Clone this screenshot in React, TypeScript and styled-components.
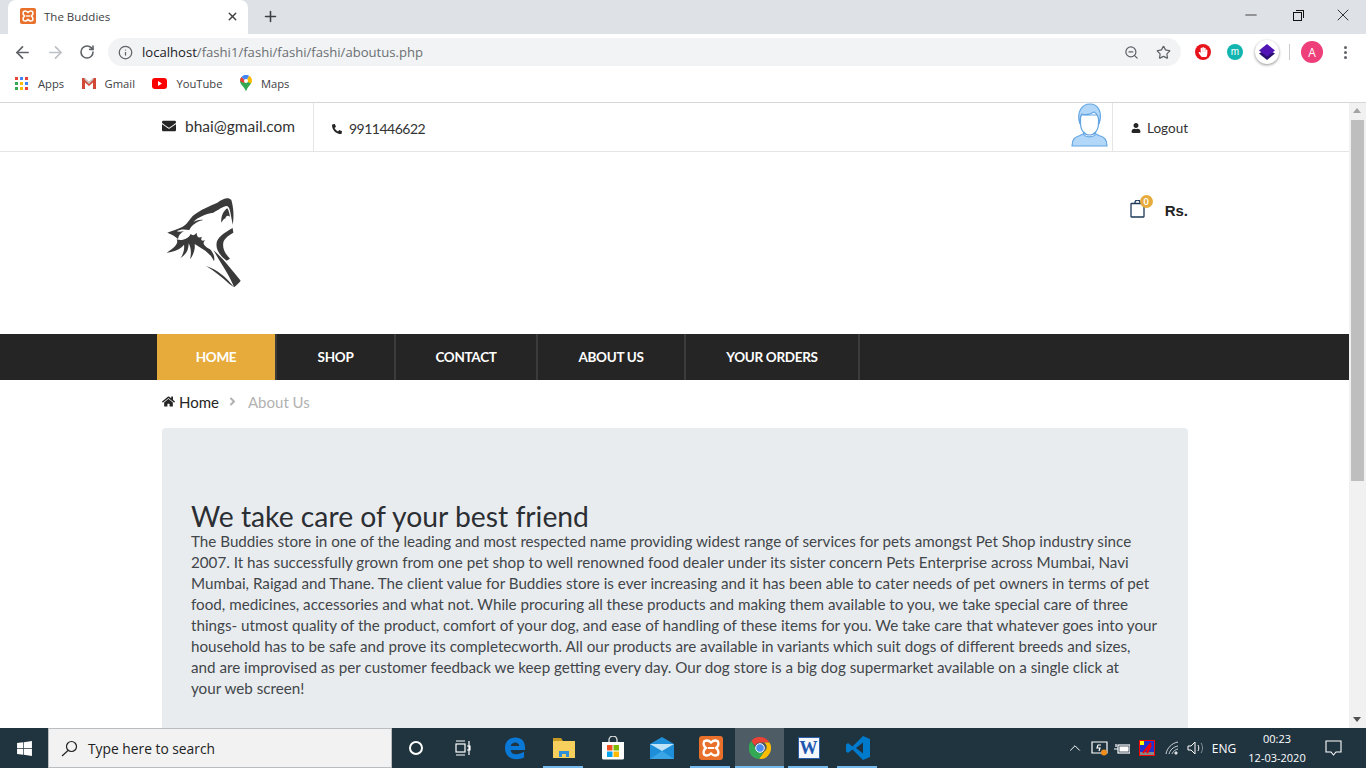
import React from "react";
import styled, { createGlobalStyle } from "styled-components";
import { FaEnvelope, FaPhone, FaUser, FaHome, FaAngleRight, FaWindows, FaHandPaper } from "react-icons/fa";
import { ArrowLeft, ArrowRight, RotateCw, Info, ZoomOut, Star, Plus, X, Minus, ChevronUp } from "lucide-react";

const ABOUT_LINES = [
	"The Buddies store in one of the leading and most respected name providing widest range of services for pets amongst Pet Shop industry since",
	"2007. It has successfully grown from one pet shop to well renowned food dealer under its sister concern Pets Enterprise across Mumbai, Navi",
	"Mumbai, Raigad and Thane. The client value for Buddies store is ever increasing and it has been able to cater needs of pet owners in terms of pet",
	"food, medicines, accessories and what not. While procuring all these products and making them available to you, we take special care of three",
	"things- utmost quality of the product, comfort of your dog, and ease of handling of these items for you. We take care that whatever goes into your",
	"household has to be safe and prove its completecworth. All our products are available in variants which suit dogs of different breeds and sizes,",
	"and are improvised as per customer feedback we keep getting every day. Our dog store is a big dog supermarket available on a single click at",
	"your web screen!",
];

const NAV_ITEMS = [
	{ label: "HOME", width: 120, active: true },
	{ label: "SHOP", width: 119 },
	{ label: "CONTACT", width: 142 },
	{ label: "ABOUT US", width: 148 },
	{ label: "YOUR ORDERS", width: 174 },
];

const XamppIcon: React.FC<{ size: number }> = ({ size }) => (
	<svg width={size} height={size} viewBox="0 0 24 24">
		<rect width="24" height="24" rx="3" fill="#e8702a" />
		<path d="M5 5.500c3-2 5-1 7 1 2-2 4-3 7-1 1 3 0 5-2 6.500 2 1.500 3 3.500 2 6.500-3 2-5 1-7-1-2 2-4 3-7 1-1-3 0-5 2-6.500-2-1.500-3-3.500-2-6.500z" fill="none" stroke="#fff" strokeWidth="2.300" />
		<path d="M9 12h6" stroke="#fff" strokeWidth="2" />
	</svg>
);

const WolfLogo = () => (
	<WolfSvg width="90" height="105" viewBox="0 0 270 315">
		<g fill="#3a3a3a">
			<path d="M214 30C204 20 190 26 172 38C150 48 122 58 98 78C88 90 80 104 68 110C52 117 38 122 22 128C34 132 44 138 54 147C56 136 62 128 72 124C64 124 58 126 50 124C62 116 76 118 88 120C96 104 112 94 130 90C118 88 108 92 100 96C112 82 136 72 160 68C175 60 190 48 200 48C208 50 210 60 212 72C214 84 216 92 218 104C223 80 220 50 214 30Z" />
			<path d="M202 55C190 62 182 80 184 98C188 92 192 84 196 86C198 76 204 76 210 80C208 70 206 60 202 55Z" />
			<path d="M218 114C200 124 178 137 171 154C165 174 176 194 200 212L210 206C192 188 186 170 191 154C198 140 210 134 220 128Z" />
			<path d="M50 148C56 160 46 172 20 188C48 184 62 176 72 164C74 178 70 192 62 204C80 192 86 178 86 160C94 174 94 192 90 208C102 192 106 176 104 162L136 182C148 192 156 200 162 214C166 200 158 186 150 178C130 166 126 160 136 150C126 156 120 150 126 140C116 146 110 140 110 128C104 136 98 138 92 132C86 146 66 154 50 148Z" />
			<path d="M160 180C190 206 214 238 242 272C237 280 230 284 222 292C214 266 190 232 160 180Z" />
			<path d="M138 228C170 238 200 262 222 292L208 282C186 262 164 244 138 228Z" />
		</g>
	</WolfSvg>
);

const App: React.FC = () => (
	<Screen>
		<GlobalStyle />
		<TabStrip>
			<Tab>
				<XamppIcon size={16} />
				<TabTitle>The Buddies</TabTitle>
				<X size={13} strokeWidth={2.5} color="#3c4043" />
			</Tab>
			<NewTab>
				<Plus size={17} strokeWidth={2.2} color="#3c4043" />
			</NewTab>
			<WindowControls>
				<WindowButton>
					<Minus size={18} strokeWidth={1} color="#111" />
				</WindowButton>
				<WindowButton>
					<RestoreIcon />
				</WindowButton>
				<WindowButton>
					<X size={20} strokeWidth={1} color="#111" />
				</WindowButton>
			</WindowControls>
		</TabStrip>
		<Toolbar>
			<ArrowLeft size={19} color="#5f6368" strokeWidth={2.2} />
			<ArrowRight size={19} color="#bdc1c6" strokeWidth={2.2} />
			<RotateCw size={16} color="#5f6368" strokeWidth={2.4} />
			<Omnibox>
				<Info size={15} color="#5f6368" strokeWidth={2} />
				<Url>
					<b>localhost</b>/fashi1/fashi/fashi/fashi/aboutus.php
				</Url>
				<OmniboxEnd>
					<ZoomOut size={15} color="#5f6368" strokeWidth={2} />
					<Star size={15} color="#5f6368" strokeWidth={2} />
				</OmniboxEnd>
			</Omnibox>
			<Extensions>
				<ExtensionDot $bg="#e8141c">
					<FaHandPaper size={10} color="#fff" />
				</ExtensionDot>
				<ExtensionDot $bg="#12b5b0">m</ExtensionDot>
				<LayersBadge>
					<svg width="18" height="18" viewBox="0 0 18 18">
						<path d="M1 10.500 9 6l8 4.500L9 17z" fill="#2a1070" />
						<path d="M1 7.500 9 1l8 6.500L9 13.500z" fill="#5215b5" />
					</svg>
				</LayersBadge>
				<ToolbarDivider />
				<Avatar>A</Avatar>
				<MenuDots>
					<i />
					<i />
					<i />
				</MenuDots>
			</Extensions>
		</Toolbar>
		<BookmarkBar>
			<Bookmark>
				<AppsGrid>
					{["#ea4335", "#4285f4", "#ea4335", "#34a853", "#fbbc04", "#4285f4", "#34a853", "#fbbc04", "#ea4335"].map((c, i) => (
						<i key={i} style={{ background: c }} />
					))}
				</AppsGrid>
				Apps
			</Bookmark>
			<Bookmark>
				<svg width="14" height="11" viewBox="0 0 14 11">
					<path d="M0 0h2.500L7 4l4.500-4H14v11h-3V4.500L7 8 3 4.500V11H0z" fill="#d14836" />
					<path d="M2.500 0 7 4l4.500-4v1.500L7 6 2.500 1.500z" fill="#c9c9c9" />
				</svg>
				Gmail
			</Bookmark>
			<Bookmark>
				<svg width="15" height="11" viewBox="0 0 15 11">
					<rect width="15" height="11" rx="3" fill="#f00" />
					<path d="M6 3v5l4-2.500z" fill="#fff" />
				</svg>
				YouTube
			</Bookmark>
			<Bookmark>
				<svg width="12" height="16" viewBox="0 0 12 16">
					<path d="M6 16C4.500 12 0 9.500 0 6c0-1.500.5-2.800 1.500-4L8 9z" fill="#34a853" />
					<path d="M6 16c1-3 3.500-5 5-7.500L6 4 3.500 10.500z" fill="#34a853" />
					<path d="M12 6c0 1-.4 1.800-1 2.500L6 6l3-5.200C11 1.700 12 3.700 12 6z" fill="#fbbc04" />
					<path d="M1.500 2 6 6 4 8 0 6c0-1.500.5-2.800 1.500-4z" fill="#ea4335" />
					<path d="M1.500 2A6 6 0 0 1 9 .8L6 6z" fill="#4285f4" />
					<circle cx="6" cy="6" r="2" fill="#fff" />
				</svg>
				Maps
			</Bookmark>
		</BookmarkBar>
		<Viewport>
			<Page>
				<TopBar>
					<Container>
						<TopBarRow>
							<MailCell>
								<FaEnvelope size={14} color="#252525" />
								bhai@gmail.com
							</MailCell>
							<PhoneCell>
								<FaPhone size={10} color="#252525" style={{ transform: "scaleX(-1)" }} />
								9911446622
							</PhoneCell>
							<TopBarEnd>
								<UserPicture width="37" height="44" viewBox="0 0 37 44">
									<path d="M1 43c0-7 3-9 8-10.500l5-2.500h9l5 2.500c5 1.500 8 3.500 8 10.500z" fill="#b3d7f8" stroke="#62a5e2" strokeWidth="1.200" />
									<path d="M13 28v4c2 2.500 9 2.500 11 0v-4z" fill="#fff" stroke="#62a5e2" strokeWidth="1.200" />
									<path d="M9.500 12v8c0 8 4.500 12 9 12s9-4 9-12v-8z" fill="#fff" stroke="#62a5e2" strokeWidth="1.200" />
									<path d="M9 21C5 9 11 1 19 1c8 0 13 8 9 20 0-6-1-10-5-12-4 2.500-9 3-12 2-2 2-2 5-2 10z" fill="#b3d7f8" stroke="#62a5e2" strokeWidth="1.200" />
								</UserPicture>
								<LogoutCell>
									<FaUser size={10} color="#252525" />
									Logout
								</LogoutCell>
							</TopBarEnd>
						</TopBarRow>
					</Container>
				</TopBar>
				<Container>
					<Masthead>
						<WolfLogo />
						<Cart>
							<CartIconWrap>
								<svg width="16" height="18" viewBox="0 0 16 18" fill="none" stroke="#1d3a5a" strokeWidth="1.300">
									<rect x="1" y="3.500" width="13" height="13.500" rx="0.500" />
									<path d="M5 3.500V2.500a2.500 2.500 0 0 1 5 0v1" />
								</svg>
								<CartBadge>0</CartBadge>
							</CartIconWrap>
							<CartTotal>Rs.</CartTotal>
						</Cart>
					</Masthead>
				</Container>
				<NavBar>
					<NavInner>
						{NAV_ITEMS.map((item) => (
							<NavItem key={item.label} $width={item.width} $active={item.active}>
								{item.label}
							</NavItem>
						))}
					</NavInner>
				</NavBar>
				<Container>
					<Breadcrumb>
						<FaHome size={13} color="#252525" />
						<span>Home</span>
						<BreadcrumbArrow>
							<FaAngleRight size={13} color="#b2b2b2" />
						</BreadcrumbArrow>
						<Muted>About Us</Muted>
					</Breadcrumb>
					<AboutCard>
						<AboutTitle>We take care of your best friend</AboutTitle>
						{ABOUT_LINES.map((line) => (
							<AboutLine key={line}>{line}</AboutLine>
						))}
					</AboutCard>
				</Container>
			</Page>
			<Scrollbar>
				<ScrollArrow $up />
				<ScrollTrack>
					<ScrollThumb />
				</ScrollTrack>
				<ScrollArrow />
			</Scrollbar>
		</Viewport>
		<Taskbar>
			<StartButton>
				<FaWindows size={17} color="#fff" />
			</StartButton>
			<SearchBox>
				<svg width="17" height="17" viewBox="0 0 17 17" fill="none" stroke="#222" strokeWidth="1.200">
					<circle cx="10.500" cy="6.500" r="5" />
					<path d="M7 10.500 1 16" />
				</svg>
				Type here to search
			</SearchBox>
			<CortanaRing />
			<TaskViewIcon>
				<svg width="16" height="16" viewBox="0 0 16 16" fill="none" stroke="#fff" strokeWidth="1.200">
					<path d="M1 1h9M1 15h9" />
					<rect x="1" y="4" width="9" height="8" />
					<path d="M14 1v14M12 6h3v4h-3" />
				</svg>
			</TaskViewIcon>
			<AppIcons>
				<AppSlot>
					<svg width="21" height="24" viewBox="0 0 22 24">
						<path d="M1 12C1 5 6 1 12 1c6 0 10 4 10 10v3H7c0 5 8 6 14 2v6c-9 4-20 1-20-10zm6-2h9c0-5-8-5-9 0z" fill="#0a78d6" />
					</svg>
				</AppSlot>
				<AppSlot $running>
					<svg width="22" height="20" viewBox="0 0 22 20">
						<path d="M0 0h8l2 3H0z" fill="#c79a22" />
						<rect y="3" width="22" height="17" fill="#f6cf5c" />
						<path d="M6 19v-6h10v6h-3v-3H9v3z" fill="#2f8fd8" />
					</svg>
				</AppSlot>
				<AppSlot>
					<svg width="24" height="24" viewBox="0 0 24 24">
						<path d="M8 6V4a4 4 0 0 1 8 0v2" fill="none" stroke="#ddd" strokeWidth="1.300" />
						<path d="M1 6h22v16a1.500 1.500 0 0 1-1.500 1.500h-19A1.500 1.500 0 0 1 1 22z" fill="#fff" />
						<rect x="6" y="9" width="5.500" height="5.500" fill="#f25022" />
						<rect x="12.500" y="9" width="5.500" height="5.500" fill="#7fba00" />
						<rect x="6" y="15.500" width="5.500" height="5.500" fill="#00a4ef" />
						<rect x="12.500" y="15.500" width="5.500" height="5.500" fill="#ffb900" />
					</svg>
				</AppSlot>
				<AppSlot>
					<svg width="24" height="22" viewBox="0 0 24 22">
						<path d="M0 7 12 0l12 7v15H0z" fill="#1f8ed8" />
						<path d="M0 7h24L12 14z" fill="#bfe3f8" />
						<path d="M0 22 12 14l12 8z" fill="#3aa5e6" />
					</svg>
				</AppSlot>
				<AppSlot $running>
					<XamppIcon size={24} />
				</AppSlot>
				<AppSlot $running $active>
					<svg width="22" height="22" viewBox="0 0 22 22">
						<path d="M11 0a11 11 0 0 1 9.500 5.500H11a5.500 5.500 0 0 0-5 3.200L2.200 4A11 11 0 0 1 11 0z" fill="#ea4335" />
						<path d="M20.500 5.500A11 11 0 0 1 10 22l4.800-7a5.500 5.500 0 0 0 .3-9.500z" fill="#fbbc04" />
						<path d="M10 22A11 11 0 0 1 2.200 4L7 12a5.500 5.500 0 0 0 7.800 3z" fill="#34a853" />
						<circle cx="11" cy="11" r="4.300" fill="#4a8cf0" stroke="#fff" strokeWidth="1" />
					</svg>
				</AppSlot>
				<AppSlot $running>
					<WordIcon>W</WordIcon>
				</AppSlot>
				<AppSlot $running>
					<svg width="24" height="24" viewBox="0 0 24 24">
						<path d="M17 0 24 3v18l-7 3L6.500 13.500 2 17l-2-1.500v-7L2 7l4.500 3.500z" fill="#007acc" />
						<path d="M17 6.500 10 12l7 5.500z" fill="#1f2f3c" />
					</svg>
				</AppSlot>
			</AppIcons>
			<Tray>
				<TraySlot $width={24}>
					<ChevronUp size={18} color="#fff" strokeWidth={1.3} />
				</TraySlot>
				<TraySlot $width={24}>
					<svg width="17" height="16" viewBox="0 0 17 16" fill="none" stroke="#fff" strokeWidth="1.200">
						<path d="M1 2h15v11H1z" />
						<path d="M10 5H7L6 8h3l-1 3" />
						<circle cx="13" cy="12.500" r="3" fill="#f28c1c" stroke="none" />
					</svg>
				</TraySlot>
				<TraySlot $width={22}>
					<svg width="16" height="11" viewBox="0 0 16 11" fill="none" stroke="#fff" strokeWidth="1.200">
						<rect x="4" y="2" width="12" height="8" />
						<rect x="6" y="4" width="8" height="4" fill="#fff" />
						<path d="M0 6h4M2 1v3" />
					</svg>
				</TraySlot>
				<TraySlot $width={28}>
					<svg width="16" height="16" viewBox="0 0 16 16">
						<rect width="16" height="16" fill="#f00" />
						<rect x="1" y="1" width="14" height="14" fill="#2233cc" />
						<rect x="1" y="12" width="14" height="3" fill="#888" />
						<path d="M4 13 12 3M8 13l4-8" stroke="#f00" strokeWidth="2" />
						<rect x="1" y="1" width="4" height="4" fill="#ff0" />
					</svg>
				</TraySlot>
				<TraySlot $width={22}>
					<svg width="14" height="14" viewBox="0 0 14 14" fill="none" stroke="#cfd4d8" strokeWidth="1">
						<path d="M1 13C2 7 7 2 13 1M4 13c1-4 4-7 9-8M7 13c1-2 2-4 6-5" />
						<circle cx="11" cy="12" r="1.200" fill="#fff" />
					</svg>
				</TraySlot>
				<TraySlot $width={24}>
					<svg width="17" height="14" viewBox="0 0 17 14" fill="none" stroke="#fff" strokeWidth="1">
						<path d="M1 5h3l4-4v12l-4-4H1zM11 4c1 2 1 4 0 6" />
						<path d="M14 2c2 3 2 7 0 10" stroke="#8a949b" />
					</svg>
				</TraySlot>
				<TraySlot $width={34}>
					<TrayText>ENG</TrayText>
				</TraySlot>
				<TraySlot $width={72}>
					<Clock>
						<span>00:23</span>
						<span>12-03-2020</span>
					</Clock>
				</TraySlot>
				<TraySlot $width={40}>
					<svg width="17" height="16" viewBox="0 0 17 16" fill="none" stroke="#fff" strokeWidth="1.100">
						<path d="M1 1h15v11h-5l-2.500 3L6 12H1z" />
					</svg>
				</TraySlot>
			</Tray>
		</Taskbar>
	</Screen>
);

export default App;

const GlobalStyle = createGlobalStyle`
	html, body {
		margin: 0;
		padding: 0;
		height: 100%;
		overflow: hidden;
		background: #fff;
	}
	* {
		box-sizing: border-box;
	}
`;

const Screen = styled.div`
	width: 1366px;
	height: 768px;
	display: flex;
	flex-direction: column;
	overflow: hidden;
	font-family: "Liberation Sans", Arial, sans-serif;
`;

const TabStrip = styled.div`
	height: 34px;
	flex: none;
	display: flex;
	align-items: flex-end;
	padding-left: 8px;
	background: #dee1e6;
`;

const Tab = styled.div`
	width: 240px;
	height: 34px;
	display: flex;
	align-items: center;
	gap: 8px;
	padding: 0 9px 2px 12px;
	background: #fff;
	border-radius: 8px 8px 0 0;
`;

const TabTitle = styled.span`
	flex: 1;
	font-family: "Open Sans", sans-serif;
	font-size: 11.500px;
	color: #3c4043;
`;

const NewTab = styled.div`
	width: 28px;
	height: 34px;
	margin-left: 8px;
	padding-bottom: 1px;
	display: flex;
	align-items: center;
	justify-content: center;
`;

const WindowControls = styled.div`
	margin-left: auto;
	height: 30px;
	margin-bottom: 4px;
	display: flex;
`;

const WindowButton = styled.div`
	width: 46px;
	display: flex;
	align-items: center;
	justify-content: center;
`;

const RestoreIcon = styled.div`
	width: 9px;
	height: 9px;
	position: relative;
	top: 1px;
	border: 1px solid #111;
	&::after {
		content: "";
		position: absolute;
		top: -3px;
		right: -3px;
		width: 7px;
		height: 7px;
		border-top: 1px solid #111;
		border-right: 1px solid #111;
	}
`;

const Toolbar = styled.div`
	height: 36px;
	flex: none;
	display: flex;
	align-items: center;
	gap: 14px;
	padding: 0 0 0 13px;
	background: #fff;
`;

const Omnibox = styled.div`
	width: 1073px;
	height: 28px;
	margin-left: -1px;
	display: flex;
	align-items: center;
	gap: 9px;
	padding: 0 10px 0 10px;
	background: #f1f3f4;
	border-radius: 14px;
`;

const Url = styled.span`
	font-family: "Open Sans", sans-serif;
	font-size: 13.100px;
	color: #6b6f73;
	b {
		font-weight: 400;
		color: #202124;
	}
`;

const OmniboxEnd = styled.div`
	margin-left: auto;
	display: flex;
	align-items: center;
	gap: 17px;
`;

const Extensions = styled.div`
	display: flex;
	align-items: center;
`;

const ExtensionDot = styled.div<{ $bg: string }>`
	width: 16px;
	height: 16px;
	margin-right: 16px;
	border-radius: 50%;
	display: flex;
	align-items: center;
	justify-content: center;
	font-size: 10px;
	line-height: 1;
	color: #fff;
	background: ${(p) => p.$bg};
`;

const LayersBadge = styled.div`
	width: 24px;
	height: 24px;
	margin-left: -4px;
	border-radius: 50%;
	background: #fff;
	box-shadow: 0 1px 3px rgba(0, 0, 0, 0.45);
	display: flex;
	align-items: center;
	justify-content: center;
`;

const ToolbarDivider = styled.div`
	width: 1px;
	height: 16px;
	margin: 0 11px 0 10px;
	background: #c8cbcf;
`;

const Avatar = styled.div`
	width: 22px;
	height: 22px;
	border-radius: 50%;
	display: flex;
	align-items: center;
	justify-content: center;
	background: #ee3f7a;
	color: #fff;
	font-family: "Open Sans", sans-serif;
	font-size: 12px;
`;

const MenuDots = styled.div`
	margin-left: 21px;
	display: flex;
	flex-direction: column;
	gap: 2px;
	i {
		width: 3px;
		height: 3px;
		background: #5f6368;
		border-radius: 50%;
	}
`;

const BookmarkBar = styled.div`
	height: 33px;
	flex: none;
	display: flex;
	align-items: center;
	gap: 17.500px;
	padding: 0 0 6px 15px;
	background: #fff;
	border-bottom: 1px solid #d4d6d9;
`;

const Bookmark = styled.div`
	display: flex;
	align-items: center;
	gap: 9px;
	font-family: "Open Sans", sans-serif;
	font-size: 11.200px;
	color: #3c4043;
`;

const AppsGrid = styled.div`
	width: 14px;
	display: grid;
	grid-template-columns: repeat(3, 3px);
	gap: 2px;
	i {
		width: 3px;
		height: 3px;
	}
`;

const Viewport = styled.div`
	flex: 1;
	min-height: 0;
	display: flex;
	overflow: hidden;
`;

const Page = styled.div`
	flex: 1;
	min-width: 0;
	overflow: hidden;
	background: #fff;
	font-family: Lato, sans-serif;
	color: #333;
`;

const TopBar = styled.div`
	height: 49px;
	border-bottom: 1px solid #e5e5e5;
`;

const Container = styled.div`
	width: 1026px;
	margin-left: 162px;
`;

const TopBarRow = styled.div`
	height: 48px;
	display: flex;
`;

const MailCell = styled.div`
	display: flex;
	align-items: center;
	gap: 9px;
	width: 152px;
	padding-bottom: 2px;
	font-size: 15.500px;
	border-right: 1px solid #e5e5e5;
`;

const PhoneCell = styled.div`
	display: flex;
	align-items: center;
	gap: 7px;
	padding: 3px 0 0 18px;
	font-size: 14px;
	letter-spacing: -0.5px;
`;

const TopBarEnd = styled.div`
	margin-left: auto;
	display: flex;
	align-items: flex-end;
`;

const UserPicture = styled.svg`
	margin-bottom: 4px;
`;

const LogoutCell = styled.div`
	width: 76px;
	height: 48px;
	margin-left: 4px;
	padding: 2px 0 0 18px;
	display: flex;
	align-items: center;
	gap: 6px;
	font-size: 13.500px;
	border-left: 1px solid #e5e5e5;
`;

const Masthead = styled.div`
	height: 182px;
	display: flex;
	justify-content: space-between;
	align-items: flex-start;
	padding-top: 38px;
`;

const WolfSvg = styled.svg`
	margin-left: -2px;
`;

const Cart = styled.div`
	display: flex;
	align-items: center;
	gap: 19px;
	margin-top: 10px;
`;

const CartIconWrap = styled.div`
	position: relative;
	width: 16px;
	height: 18px;
	margin-bottom: 3px;
`;

const CartBadge = styled.span`
	position: absolute;
	top: -5px;
	left: 10px;
	width: 13px;
	height: 13px;
	border-radius: 50%;
	background: #e7ab3c;
	color: #fff;
	font-size: 9px;
	font-weight: 700;
	line-height: 13px;
	text-align: center;
`;

const CartTotal = styled.span`
	font-family: "Liberation Sans", sans-serif;
	font-size: 15px;
	font-weight: 700;
	color: #232323;
`;

const NavBar = styled.div`
	height: 46px;
	background: #252525;
`;

const NavInner = styled.nav`
	height: 100%;
	display: flex;
	margin-left: 157px;
`;

const NavItem = styled.div<{ $width: number; $active?: boolean }>`
	width: ${(p) => p.$width}px;
	display: flex;
	align-items: center;
	justify-content: center;
	font-size: 13.500px;
	font-weight: 700;
	letter-spacing: -0.3px;
	color: #fff;
	background: ${(p) => (p.$active ? "#e7ab3c" : "transparent")};
	border-right: 2px solid #3b3b3b;
`;

const Breadcrumb = styled.div`
	height: 48px;
	display: flex;
	align-items: center;
	gap: 4px;
	padding-bottom: 5px;
	font-size: 15px;
	color: #252525;
`;

const BreadcrumbArrow = styled.span`
	display: flex;
	margin-left: 3px;
`;

const Muted = styled.span`
	margin-left: 5px;
	color: #b2b2b2;
`;

const AboutCard = styled.div`
	height: 400px;
	padding: 73px 29px 0;
	background: #e9ecef;
	border-radius: 4px;
`;

const AboutTitle = styled.h1`
	margin: 0;
	font-size: 28.300px;
	font-weight: 400;
	line-height: 30px;
	color: #2b2f33;
`;

const AboutLine = styled.div`
	height: 21px;
	font-size: 15.200px;
	line-height: 21px;
	white-space: nowrap;
	color: #42464a;
`;

const Scrollbar = styled.div`
	width: 17px;
	flex: none;
	display: flex;
	flex-direction: column;
	background: #f1f1f1;
`;

const ScrollArrow = styled.div<{ $up?: boolean }>`
	height: 17px;
	flex: none;
	position: relative;
	&::after {
		content: "";
		position: absolute;
		left: 4px;
		${(p) => (p.$up ? "top: 5px; border-bottom: 5px solid #a3a3a3;" : "top: 6px; border-top: 5px solid #505050;")}
		border-left: 4.500px solid transparent;
		border-right: 4.500px solid transparent;
	}
`;

const ScrollTrack = styled.div`
	flex: 1;
	padding: 0 2px;
`;

const ScrollThumb = styled.div`
	height: 361px;
	background: #bebebe;
`;

const Taskbar = styled.div`
	height: 40px;
	flex: none;
	display: flex;
	align-items: center;
	background: #20343f;
`;

const StartButton = styled.div`
	width: 48px;
	height: 40px;
	display: flex;
	align-items: center;
	justify-content: center;
`;

const SearchBox = styled.div`
	width: 344px;
	height: 40px;
	display: flex;
	align-items: center;
	gap: 10px;
	padding-left: 12px;
	background: #f2f2f2;
	border: 1px solid #b9bdbf;
	font-family: "Open Sans", sans-serif;
	font-size: 13.800px;
	color: #222;
`;

const CortanaRing = styled.div`
	width: 14px;
	height: 14px;
	margin-left: 17px;
	border: 2px solid #fff;
	border-radius: 50%;
`;

const TaskViewIcon = styled.div`
	margin-left: 32px;
	height: 16px;
`;

const AppIcons = styled.div`
	display: flex;
	margin-left: 19px;
`;

const AppSlot = styled.div<{ $running?: boolean; $active?: boolean }>`
	width: 49px;
	height: 40px;
	position: relative;
	display: flex;
	align-items: center;
	justify-content: center;
	background: ${(p) => (p.$active ? "#4d5c65" : "transparent")};
	&::after {
		content: "";
		display: ${(p) => (p.$running ? "block" : "none")};
		position: absolute;
		bottom: 0;
		left: ${(p) => (p.$active ? "0" : "4px")};
		right: ${(p) => (p.$active ? "0" : "5px")};
		height: 2px;
		background: #76b9ed;
	}
`;

const WordIcon = styled.div`
	width: 22px;
	height: 22px;
	background: #f4f7fb;
	border: 1px solid #2b5ea8;
	color: #1c56b0;
	font-family: "Liberation Serif", serif;
	font-size: 18px;
	font-weight: 700;
	line-height: 20px;
	text-align: center;
`;

const Tray = styled.div`
	margin-left: auto;
	display: flex;
	align-items: center;
	padding-right: 13px;
`;

const TraySlot = styled.div<{ $width: number }>`
	width: ${(p) => p.$width}px;
	display: flex;
	align-items: center;
	justify-content: center;
`;

const TrayText = styled.span`
	font-family: "Open Sans", sans-serif;
	font-size: 12px;
	color: #fff;
`;

const Clock = styled.div`
	display: flex;
	flex-direction: column;
	align-items: center;
	gap: 5px;
	font-family: "Open Sans", sans-serif;
	font-size: 11px;
	line-height: 14px;
	color: #fff;
`;
